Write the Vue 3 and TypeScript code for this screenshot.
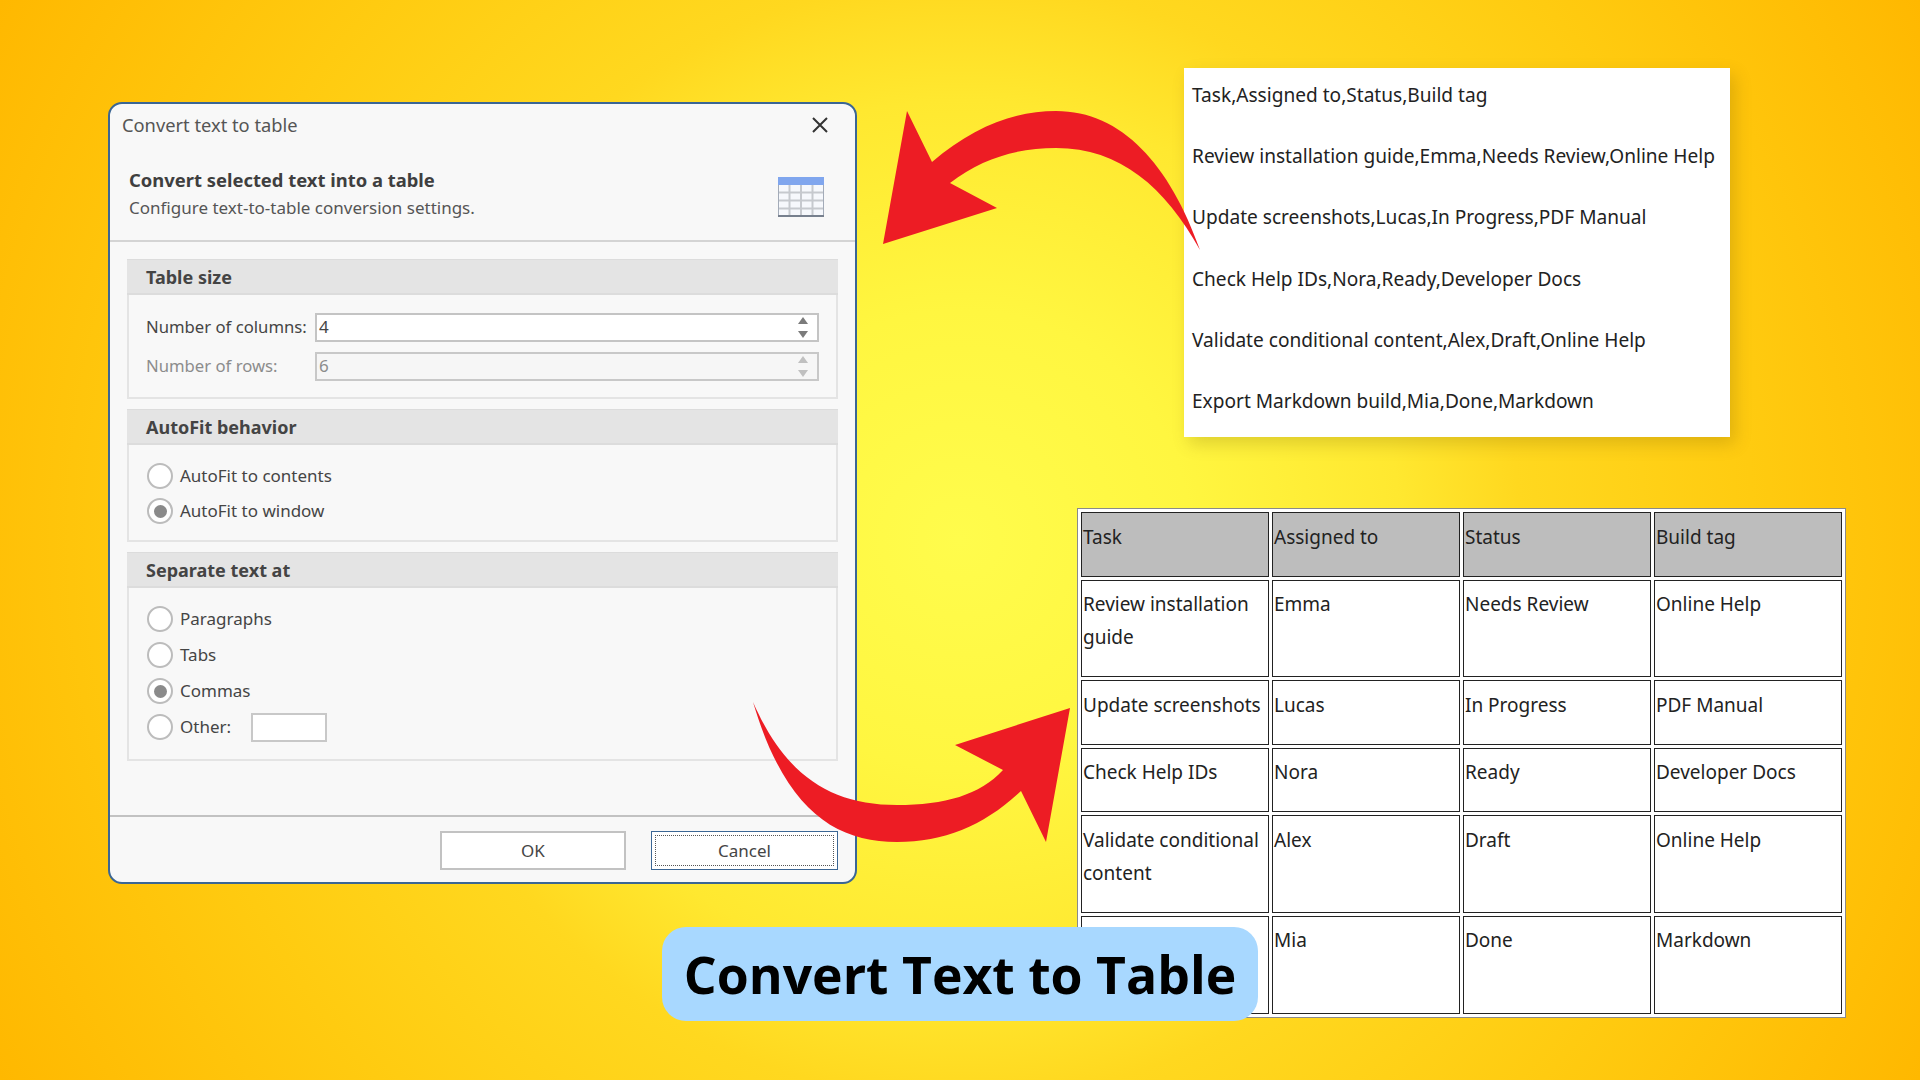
<template>
  <main class="stage">
    <section class="dialog">
      <div class="dialog__title">
        <span>Convert text to table</span>
        <svg class="close-icon" width="16" height="16" viewBox="0 0 16 16" aria-hidden="true">
          <path d="M1 1 15 15M15 1 1 15" stroke="#333" stroke-width="2" fill="none" />
        </svg>
      </div>
      <header class="dialog__head">
        <div>
          <h1>Convert selected text into a table</h1>
          <p>Configure text-to-table conversion settings.</p>
        </div>
        <svg class="table-icon" width="46" height="40" viewBox="0 0 46 40" aria-hidden="true">
          <rect x="0.5" y="0.5" width="45" height="39" fill="#f6f8fc" stroke="#a3abb8" />
          <rect x="0" y="0" width="46" height="8" fill="#80a6ee" />
          <path d="M11.5 8v31M23 8v31M34.500 8v31M1 15.500h44M1 23.500h44M1 31.500h44" stroke="#c6c9ce" stroke-width="2" fill="none" />
          <path d="M0 39h46" stroke="#77808e" stroke-width="2" />
        </svg>
      </header>

      <div class="dialog__body">
        <fieldset class="group">
          <h2>Table size</h2>
          <div class="group__body group__body--fields">
            <label v-for="field in sizeFields" :key="field.label" class="field" :class="{ 'field--off': field.off }">
              <span class="field__label">{{ field.label }}</span>
              <span class="field__input">
                <span class="lift">{{ field.value }}</span>
                <span class="spin"><i class="spin__up"></i><i class="spin__down"></i></span>
              </span>
            </label>
          </div>
        </fieldset>

        <fieldset class="group">
          <h2>AutoFit behavior</h2>
          <div class="group__body group__body--autofit">
            <div v-for="opt in autofitOptions" :key="opt.label" class="radio">
              <span class="radio__dot" :class="{ on: opt.on }"></span>
              <span class="lift">{{ opt.label }}</span>
            </div>
          </div>
        </fieldset>

        <fieldset class="group">
          <h2>Separate text at</h2>
          <div class="group__body group__body--separators">
            <div v-for="opt in separatorOptions" :key="opt.label" class="radio">
              <span class="radio__dot" :class="{ on: opt.on }"></span>
              <span class="lift">{{ opt.label }}</span>
              <span v-if="opt.input" class="other-input"></span>
            </div>
          </div>
        </fieldset>
      </div>

      <footer class="dialog__foot">
        <button class="btn">OK</button>
        <button class="btn btn--focus"><span>Cancel</span></button>
      </footer>
    </section>

    <div class="right">
      <div class="note">
        <p v-for="line in noteLines" :key="line">{{ line }}</p>
      </div>
      <table class="result">
        <tbody>
          <tr v-for="(row, i) in rows" :key="i" :class="{ head: i === 0 }">
            <td v-for="(cell, c) in row" :key="c">{{ cell }}</td>
          </tr>
        </tbody>
      </table>
    </div>

    <svg class="arrows" width="1920" height="1080" viewBox="0 0 1920 1080" aria-hidden="true">
      <path
        d="M907 111 L932 162 C973 127 1015 111 1056 111 C1122 111 1170 165 1200 250 C1165 187 1120 148 1056 148 C1018 148 982 158 950 183 L997 208 L883 244 Z"
        fill="#ed1c24"
      />
      <path
        d="M753 702 C785 775 830 805 897 805 C945 805 980 795 1003 770 L955 745 L1070 708 L1046 842 L1021 791 C985 825 945 842 897 842 C835 842 785 810 753 702 Z"
        fill="#ed1c24"
      />
    </svg>

    <div class="banner">Convert Text to Table</div>
  </main>
</template>

<script setup lang="ts">
interface RadioOption {
  label: string
  on?: boolean
  input?: boolean
}

const sizeFields = [
  { label: 'Number of columns:', value: '4', off: false },
  { label: 'Number of rows:', value: '6', off: true },
]

const autofitOptions: RadioOption[] = [
  { label: 'AutoFit to contents' },
  { label: 'AutoFit to window', on: true },
]

const separatorOptions: RadioOption[] = [
  { label: 'Paragraphs' },
  { label: 'Tabs' },
  { label: 'Commas', on: true },
  { label: 'Other:', input: true },
]

const noteLines = [
  'Task,Assigned to,Status,Build tag',
  'Review installation guide,Emma,Needs Review,Online Help',
  'Update screenshots,Lucas,In Progress,PDF Manual',
  'Check Help IDs,Nora,Ready,Developer Docs',
  'Validate conditional content,Alex,Draft,Online Help',
  'Export Markdown build,Mia,Done,Markdown',
]

// the first cell of the last row sits under the banner, nothing of it shows
const rows = [
  ['Task', 'Assigned to', 'Status', 'Build tag'],
  ['Review installation guide', 'Emma', 'Needs Review', 'Online Help'],
  ['Update screenshots', 'Lucas', 'In Progress', 'PDF Manual'],
  ['Check Help IDs', 'Nora', 'Ready', 'Developer Docs'],
  ['Validate conditional content', 'Alex', 'Draft', 'Online Help'],
  ['', 'Mia', 'Done', 'Markdown'],
]
</script>

<style>
html,
body {
  margin: 0;
  background: #ffd21c;
}
</style>

<style scoped>
.stage {
  position: relative;
  width: 1920px;
  height: 1080px;
  overflow: hidden;
  display: flex;
  align-items: flex-start;
  padding-left: 108px;
  box-sizing: border-box;
  background: radial-gradient(circle 1101px at 50% 50%, #fffc4c 0, #fff640 230px, #ffe830 440px, #ffd81f 560px, #ffcb10 793px, #ffb800 1101px);
}

.dialog {
  width: 749px;
  height: 782px;
  margin-top: 102px;
  box-sizing: border-box;
  display: flex;
  flex-direction: column;
  flex: none;
  background: #f8f8f8;
  border: 2px solid #3b6694;
  border-radius: 14px;
  color: #454545;
  font-family: 'Noto Sans', sans-serif;
  font-size: 17px;
}

.dialog__title {
  height: 41px;
  padding: 0 27px 0 12px;
  display: flex;
  align-items: center;
  justify-content: space-between;
  font-size: 18.3px;
  color: #555;
}

.dialog__head {
  height: 97px;
  box-sizing: border-box;
  padding: 21px 31px 0 19px;
  display: flex;
  justify-content: space-between;
  align-items: flex-start;
  border-bottom: 2px solid #d4d4d4;
}

.dialog__head h1 {
  margin: 0;
  font-size: 18.4px;
  line-height: 28px;
  font-weight: 700;
  color: #3f3f3f;
}

.dialog__head p {
  margin: 0;
  line-height: 27px;
  font-size: 17px;
  color: #555;
}

.table-icon {
  margin-top: 11px;
}

.dialog__body {
  padding: 17px 17px 0;
  display: flex;
  flex-direction: column;
  gap: 10px;
}

.group {
  margin: 0;
  padding: 0;
  border: 2px solid #e4e4e4;
  border-top: 0;
  min-width: 0;
}

.group h2 {
  margin: 0 -2px;
  height: 36px;
  box-sizing: border-box;
  padding-left: 19px;
  display: flex;
  align-items: center;
  background: #e4e4e4;
  border-bottom: 2px solid #dcdcdc;
  border-top: 1px solid #dcdcdc;
  font-size: 18px;
  font-weight: 700;
  color: #444;
}

.group__body {
  padding: 18px 17px 16px 18px;
  display: flex;
  flex-direction: column;
}

.group__body--fields {
  padding-left: 17px;
  gap: 10px;
}

.group__body--autofit {
  gap: 9px;
}

.group__body--separators {
  gap: 10px;
  padding-bottom: 19px;
}

.lift {
  padding-bottom: 2px;
}

.field {
  display: flex;
  align-items: center;
}

.field__label {
  width: 169px;
  padding-bottom: 2px;
  font-size: 16.7px;
}

.field--off {
  color: #8c8c8c;
}

.field__input {
  flex: 1;
  height: 29px;
  box-sizing: border-box;
  padding: 0 9px 0 2px;
  display: flex;
  align-items: center;
  justify-content: space-between;
  background: #fff;
  border: 2px solid #c4c4c4;
}

.field--off .field__input {
  background: #f6f6f6;
  border-color: #c8c8c8;
}

.spin {
  display: flex;
  flex-direction: column;
  gap: 7px;
}

.spin i {
  display: block;
  width: 0;
  height: 0;
  border-left: 5px solid transparent;
  border-right: 5px solid transparent;
}

.spin__up {
  border-bottom: 7px solid #7b7b7b;
}

.spin__down {
  border-top: 7px solid #7b7b7b;
}

.field--off .spin__up {
  border-bottom-color: #c0c0c0;
}

.field--off .spin__down {
  border-top-color: #c0c0c0;
}

.radio {
  height: 26px;
  display: flex;
  align-items: center;
  gap: 7px;
}

.radio__dot {
  width: 26px;
  height: 26px;
  box-sizing: border-box;
  flex: none;
  border: 2px solid #bcbcbc;
  border-radius: 50%;
  background: #fff;
  display: flex;
  align-items: center;
  justify-content: center;
}

.radio__dot.on::after {
  content: '';
  width: 13px;
  height: 13px;
  border-radius: 50%;
  background: #8a8a8a;
}

.other-input {
  width: 76px;
  height: 29px;
  box-sizing: border-box;
  margin-left: 12.5px;
  background: #fff;
  border: 2px solid #c8c8c8;
}

.dialog__foot {
  margin-top: auto;
  height: 67px;
  box-sizing: border-box;
  padding: 14px 17px 0;
  display: flex;
  justify-content: flex-end;
  align-items: flex-start;
  gap: 25px;
  border-top: 2px solid #c2c2c2;
}

.btn {
  width: 186px;
  height: 39px;
  padding: 0;
  box-sizing: border-box;
  background: #fff;
  border: 2px solid #c2c2c2;
  color: #454545;
  font-family: inherit;
  font-size: 17px;
}

.btn--focus {
  width: 187px;
  padding: 3px;
  border: 1.500px solid #3b6694;
}

.btn--focus span {
  display: flex;
  align-items: center;
  justify-content: center;
  height: 100%;
  border: 1px dotted #555;
  box-sizing: border-box;
}

.right {
  width: 769px;
  flex: none;
  margin-left: 220px;
  display: flex;
  flex-direction: column;
  align-items: flex-start;
  color: #222;
  font-family: 'Noto Sans', sans-serif;
}

.note {
  width: 546px;
  height: 369px;
  margin: 68px 0 0 107px;
  padding: 12px 0 0 8px;
  box-sizing: border-box;
  background: #fff;
  box-shadow: 5px 7px 16px rgba(90, 70, 0, 0.2);
  font-size: 19.1px;
}

.note p {
  margin: 0;
  height: 61.2px;
  line-height: 30px;
  white-space: nowrap;
}

.result {
  width: 769px;
  margin-top: 71px;
  box-sizing: border-box;
  table-layout: fixed;
  border-collapse: separate;
  border-spacing: 3px;
  background: #fff;
  border: 1.500px solid #8a8a8a;
  font-size: 19px;
  line-height: 33px;
}

.result td {
  padding: 7.5px 1px 22px;
  vertical-align: top;
  background: #fff;
  border: 1.500px solid #222;
}

.result .head td {
  background: #bdbdbd;
}

.result tr:last-child td {
  height: 98px;
  box-sizing: border-box;
}

.arrows {
  position: absolute;
  inset: 0;
  pointer-events: none;
}

.banner {
  position: absolute;
  left: 662px;
  top: 927px;
  width: 596px;
  height: 94px;
  border-radius: 24px;
  background: #a8d8ff;
  color: #000;
  display: flex;
  align-items: center;
  justify-content: center;
  font-family: 'Open Sans', sans-serif;
  font-weight: 700;
  font-size: 51.7px;
}
</style>
